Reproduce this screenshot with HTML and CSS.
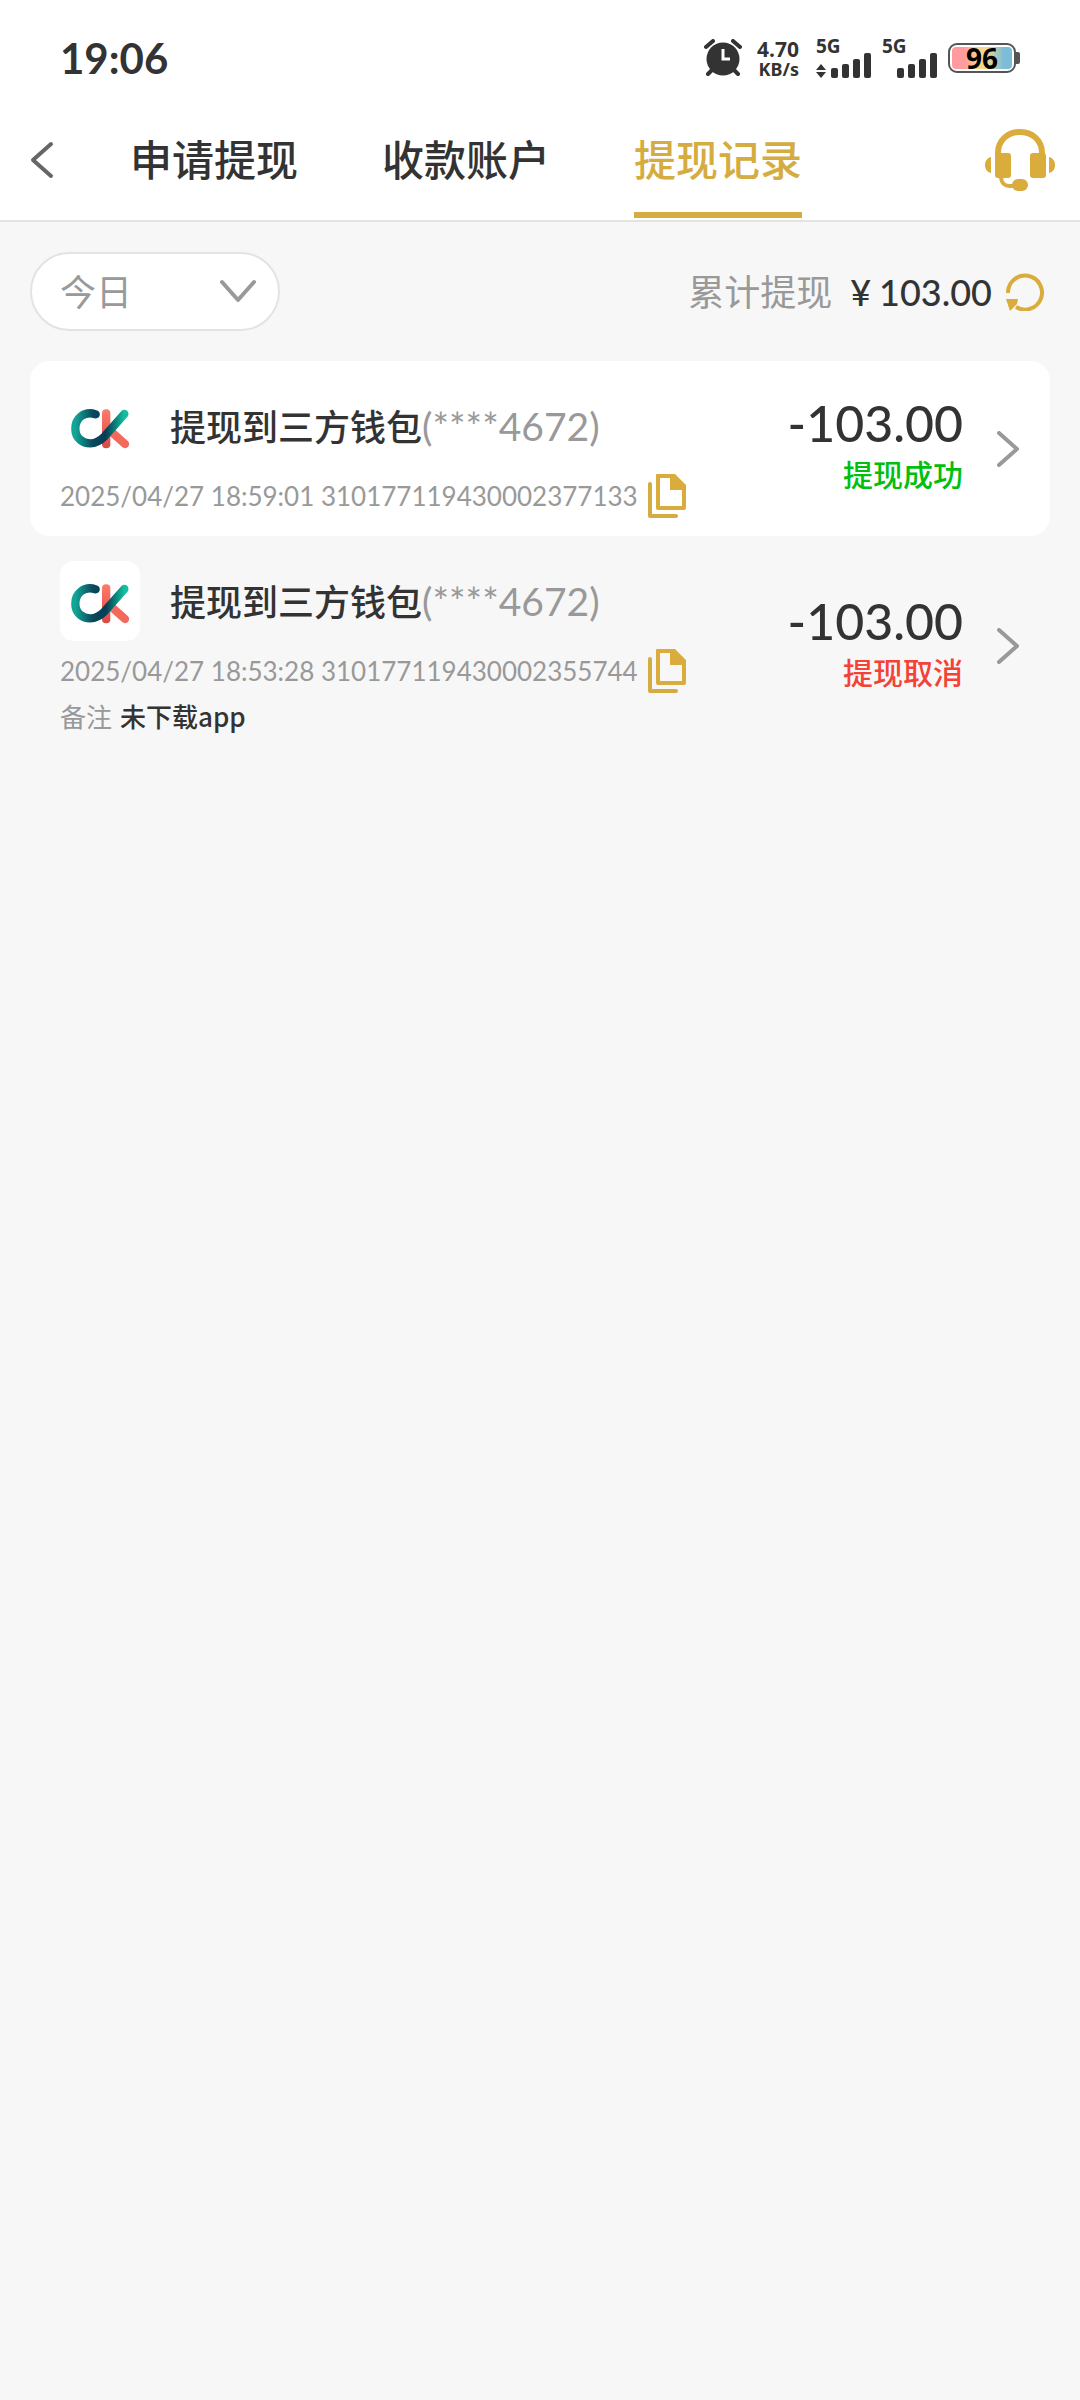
FILE: index.html
```html
<!DOCTYPE html>
<html lang="zh-CN">
<head>
<meta charset="utf-8">
<meta name="viewport" content="width=device-width, initial-scale=1">
<title>提现记录</title>
<link rel="stylesheet" href="styles.css">
</head>
<body>
<svg class="defs" width="0" height="0" aria-hidden="true">
  <defs>
    <linearGradient id="teal" x1="0" y1="0" x2="1" y2="0">
      <stop offset="0" stop-color="#12a596"/><stop offset=".35" stop-color="#0a4a5c"/>
      <stop offset=".62" stop-color="#063c54"/><stop offset="1" stop-color="#12c09f"/>
    </linearGradient>
    <linearGradient id="coral" x1="0" y1="0" x2="0" y2="1">
      <stop offset="0" stop-color="#ff7b6b"/><stop offset="1" stop-color="#dc4744"/>
    </linearGradient>
    <symbol id="logo" viewBox="0 0 240 240">
      <rect x="126" y="70" width="25" height="117" rx="12" fill="url(#coral)"/>
      <path d="M150 134L195 174" fill="none" stroke="#f4695c" stroke-width="25" stroke-linecap="round"/>
      <path d="M107 85C74 73 46 96 46 128C46 158 69 172 91 172C111 172 122 163 134 151L193 84" fill="none" stroke="url(#teal)" stroke-width="25" stroke-linecap="round" stroke-linejoin="round"/>
    </symbol>
    <symbol id="copy" viewBox="0 0 38 44">
      <path d="M2 10V42H28" fill="none" stroke="#d5ac41" stroke-width="4" stroke-linecap="round" stroke-linejoin="round"/>
      <path fill-rule="evenodd" fill="#d9ac3c" d="M9 0H27L38 11V34Q38 36 36 36H10Q8 36 8 34V1Q8 0 9 0ZM12 4V32H34V16H22V4Z"/>
    </symbol>
    <symbol id="next" viewBox="0 0 22 36">
      <path d="M2 2L20 18L2 34" fill="none" stroke="#999" stroke-width="4" stroke-linecap="round" stroke-linejoin="round"/>
    </symbol>
  </defs>
</svg>

<div class="statusbar">
  <time class="clock">19:06</time>
  <div class="indicators">
    <svg class="alarm" width="38" height="38" viewBox="0 0 38 38" aria-label="闹钟">
      <circle cx="19" cy="20" r="16.5" fill="#333"/>
      <path d="M2 8L9 2M36 8L29 2M8 31L4 35M30 31L34 35" stroke="#333" stroke-width="4" stroke-linecap="round"/>
      <path d="M19 10V20H26" fill="none" stroke="#fff" stroke-width="3"/>
    </svg>
    <div class="speed"><span>4.70</span><small>KB/s</small></div>
    <div class="signal">
      <span class="net">5G</span>
      <svg width="56" height="26" viewBox="0 0 56 26" fill="#333"><path d="M0 17L5 11L10 17ZM0 19L5 25L10 19Z"/><rect x="15" y="15" width="7" height="10" rx="2"/><rect x="26" y="11" width="7" height="14" rx="2"/><rect x="37" y="6" width="7" height="19" rx="2"/><rect x="48" y="0" width="7" height="25" rx="2"/></svg>
    </div>
    <div class="signal">
      <span class="net">5G</span>
      <svg width="56" height="26" viewBox="0 0 56 26" fill="#333"><rect x="15" y="15" width="7" height="10" rx="2"/><rect x="26" y="11" width="7" height="14" rx="2"/><rect x="37" y="6" width="7" height="19" rx="2"/><rect x="48" y="0" width="7" height="25" rx="2"/></svg>
    </div>
    <div class="battery"><span class="level">96</span></div>
  </div>
</div>

<header class="header">
  <button class="icon-btn" type="button" aria-label="返回">
    <svg width="24" height="38" viewBox="0 0 24 38"><path d="M21 3L3 19L21 35" fill="none" stroke="#666" stroke-width="4" stroke-linecap="round" stroke-linejoin="round"/></svg>
  </button>
  <nav class="tabs">
    <a class="tab" href="#apply">申请提现</a>
    <a class="tab" href="#accounts">收款账户</a>
    <a class="tab active" href="#records" aria-current="page">提现记录</a>
  </nav>
  <button class="icon-btn" type="button" aria-label="客服">
    <svg width="70" height="62" viewBox="0 0 70 62" fill="#d9ac3c">
      <path d="M13 26V24C13 11 23 3 35 3S57 11 57 24V26" fill="none" stroke="#d9ac3c" stroke-width="6"/>
      <rect x="10" y="24" width="16" height="25" rx="3"/><rect x="45" y="24" width="16" height="25" rx="3"/>
      <path d="M6 28C2 29 0 32 0 36S2 43 6 44ZM64 28C68 29 70 32 70 36S68 43 64 44Z"/>
      <path d="M16 47C16 54 20 57 24 57H32" fill="none" stroke="#d9ac3c" stroke-width="4"/>
      <rect x="27" y="50" width="16" height="12" rx="6"/>
    </svg>
  </button>
</header>

<main class="main">
  <div class="toolbar">
    <div class="picker">
      <select class="range" aria-label="日期范围"><option>今日</option></select>
      <svg class="caret" width="38" height="24" viewBox="0 0 38 24"><path d="M3 3L19 21L35 3" fill="none" stroke="#999" stroke-width="4" stroke-linecap="round" stroke-linejoin="round"/></svg>
    </div>
    <div class="total">
      <span class="total-label">累计提现</span>
      <span class="total-value"><span>¥</span><span>103.00</span></span>
      <button class="icon-btn" type="button" aria-label="刷新">
        <svg width="38" height="38" viewBox="0 0 38 38"><path d="M2 20A17 17 0 1 1 10 34" fill="none" stroke="#d9ac3c" stroke-width="4"/><path d="M0 26H12L11 31L4 38Z" fill="#d9ac3c"/></svg>
      </button>
    </div>
  </div>

  <ul class="records">
    <li class="record card">
      <div class="info">
        <div class="head">
          <svg class="logo" width="80" height="80"><use href="#logo"/></svg>
          <h2 class="title">提现到三方钱包<span class="tail">(****4672)</span></h2>
        </div>
        <div class="meta">
          <span>2025/04/27 18:59:01 310177119430002377133</span>
          <button class="icon-btn" type="button" aria-label="复制"><svg width="38" height="44"><use href="#copy"/></svg></button>
        </div>
      </div>
      <div class="result">
        <span class="amount">-103.00</span>
        <span class="state ok">提现成功</span>
      </div>
      <svg width="22" height="36"><use href="#next"/></svg>
    </li>
    <li class="record">
      <div class="info">
        <div class="head">
          <svg class="logo" width="80" height="80"><use href="#logo"/></svg>
          <h2 class="title">提现到三方钱包<span class="tail">(****4672)</span></h2>
        </div>
        <div class="meta">
          <span>2025/04/27 18:53:28 310177119430002355744</span>
          <button class="icon-btn" type="button" aria-label="复制"><svg width="38" height="44"><use href="#copy"/></svg></button>
        </div>
        <p class="remark"><span class="remark-label">备注</span><span>未下载app</span></p>
      </div>
      <div class="result">
        <span class="amount">-103.00</span>
        <span class="state fail">提现取消</span>
      </div>
      <svg width="22" height="36"><use href="#next"/></svg>
    </li>
  </ul>
</main>
</body>
</html>
```

FILE: styles.css
```css
* { box-sizing: border-box; }

body {
  margin: 0;
  min-height: 100vh;
  background: #f7f7f7;
  color: #333;
  font-family: Lato, "Noto Sans CJK SC", sans-serif;
}

svg { display: block; flex: none; }
.defs { position: absolute; }

.icon-btn {
  display: block;
  padding: 0;
  border: 0;
  background: none;
  cursor: pointer;
}

/* Status bar */
.statusbar {
  display: flex;
  justify-content: space-between;
  align-items: center;
  height: 100px;
  padding: 16px 60px 0;
  background: #fff;
}
.clock { font-size: 42px; font-weight: 700; line-height: 50px; }
.indicators { display: flex; align-items: center; }
.speed {
  display: flex;
  flex-direction: column;
  align-items: flex-end;
  margin: 0 17px 0 15px;
  font-family: "Noto Sans", sans-serif;
  font-size: 21px;
  font-weight: 700;
  line-height: 21px;
}
.speed small { font-size: 18px; line-height: 18px; }
.signal {
  display: flex;
  flex-direction: column;
  height: 42px;
  justify-content: space-between;
  margin-right: 10px;
}
.net {
  height: 12px;
  font-family: "Noto Sans", sans-serif;
  font-size: 19px;
  font-weight: 700;
  line-height: 18px;
}
.battery {
  position: relative;
  width: 68px;
  height: 30px;
  padding: 2px;
  border: 2px solid #555;
  border-radius: 9px;
  margin-right: 4px;
}
.battery::after {
  content: "";
  position: absolute;
  top: 7px;
  right: -6px;
  width: 4px;
  height: 12px;
  border-radius: 0 2px 2px 0;
  background: #555;
}
.level {
  display: block;
  border-radius: 4px;
  background: linear-gradient(90deg, #ff9a9e 20%, #fad08a 42%, #f5d98c 56%, #7dbcd6 86%);
  color: #000;
  font-family: "Noto Sans", sans-serif;
  font-size: 28px;
  font-weight: 700;
  line-height: 22px;
  text-align: center;
}

/* Header */
.header {
  display: flex;
  align-items: center;
  height: 122px;
  padding: 0 25px 0 30px;
  border-bottom: 2px solid #e3e3e3;
  background: #fff;
}
.tabs {
  display: flex;
  flex: 1;
  gap: 84px;
  height: 120px;
  padding-left: 76px;
}
.tab {
  height: 118px;
  border: solid transparent;
  border-width: 6px 0;
  color: #333;
  font-size: 42px;
  font-weight: 500;
  line-height: 108px;
  text-decoration: none;
}
.tab.active { border-bottom-color: #d5ac41; color: #d5ac41; }

/* Filter and total */
.main { padding: 30px; }
.toolbar { display: flex; justify-content: space-between; align-items: center; padding-right: 6px; }
.picker { position: relative; }
.range {
  display: block;
  width: 250px;
  height: 79px;
  padding: 0 28px;
  border: 2px solid #e3e3e3;
  border-radius: 40px;
  background: #fff;
  color: #999;
  font: inherit;
  font-size: 36px;
  appearance: none;
}
.caret { position: absolute; top: 27px; right: 23px; pointer-events: none; }
.total { display: flex; align-items: center; font-size: 36px; line-height: 48px; }
.total-label { margin-right: 18px; color: #999; }
.total-value { display: flex; gap: 8px; margin-right: 14px; font-weight: 500; }

/* Records */
.records { margin: 30px 0 0; padding: 0; list-style: none; }
.record {
  display: flex;
  align-items: center;
  gap: 34px;
  padding: 0 31px 0 30px;
}
.card { border-radius: 20px; background: #fff; }
.info { flex: 1; min-width: 0; padding: 25px 0 18px; }
.head { display: flex; align-items: center; gap: 30px; }
.logo { border-radius: 14px; background: #fff; }
.title { margin: 0; font-size: 36px; font-weight: 500; line-height: 48px; }
.tail { color: #999; font-size: 39px; font-weight: 400; }
.meta {
  display: flex;
  align-items: center;
  gap: 10px;
  margin-top: 8px;
  color: #999;
  font-size: 26px;
  line-height: 44px;
  white-space: nowrap;
}
.remark {
  display: flex;
  gap: 8px;
  margin: 2px 0;
  font-family: "Noto Sans CJK SC", sans-serif;
  font-size: 26px;
  font-weight: 500;
  line-height: 41px;
}
.remark-label { color: #999; font-weight: 400; }
.result { display: flex; flex-direction: column; align-items: flex-end; padding-bottom: 9px; }
.amount { font-size: 50px; font-weight: 500; line-height: 60px; }
.state { font-size: 30px; font-weight: 500; line-height: 42px; }
.ok { color: #00bf0f; }
.fail { color: #f44336; }
```
